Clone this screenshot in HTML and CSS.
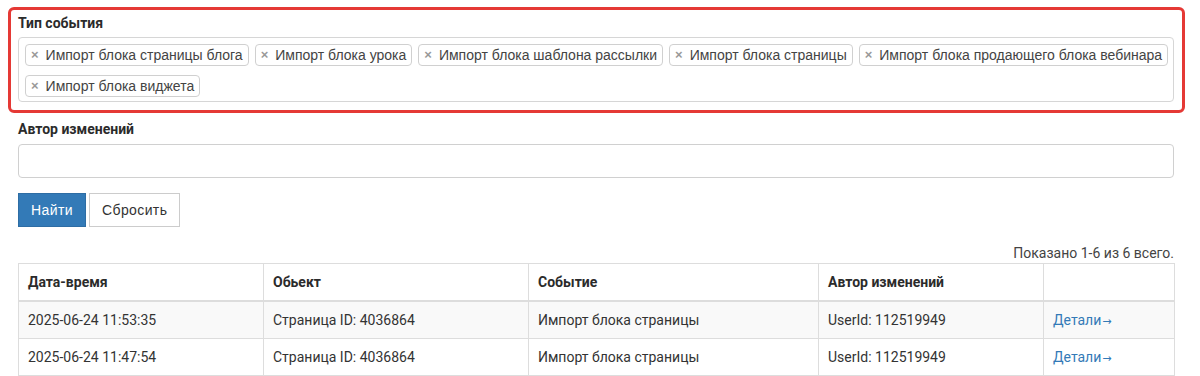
FILE: index.html
```html
<!DOCTYPE html>
<html lang="ru">
<head>
<meta charset="utf-8">
<title>Журнал</title>
<link rel="stylesheet" href="styles.css">
</head>
<body>
<div class="page">
  <div class="highlight">
    <div class="field">
      <label class="label">Тип события</label>
      <div class="select">
        <span class="tag"><span class="tag-x">×</span>Импорт блока страницы блога</span>
        <span class="tag"><span class="tag-x">×</span>Импорт блока урока</span>
        <span class="tag"><span class="tag-x">×</span>Импорт блока шаблона рассылки</span>
        <span class="tag"><span class="tag-x">×</span>Импорт блока страницы</span>
        <span class="tag"><span class="tag-x">×</span>Импорт блока продающего блока вебинара</span>
        <span class="tag"><span class="tag-x">×</span>Импорт блока виджета</span>
      </div>
    </div>
  </div>
  <div class="field author">
    <label class="label">Автор изменений</label>
    <input class="input" type="text">
  </div>
  <div class="buttons">
    <button class="btn btn-primary">Найти</button>
    <button class="btn btn-default">Сбросить</button>
  </div>
  <div class="summary">Показано 1-6 из 6 всего.</div>
  <table class="grid">
    <colgroup>
      <col class="c1"><col class="c2"><col class="c3"><col class="c4"><col class="c5">
    </colgroup>
    <thead>
      <tr><th>Дата-время</th><th>Обьект</th><th>Событие</th><th>Автор изменений</th><th></th></tr>
    </thead>
    <tbody>
      <tr><td>2025-06-24 11:53:35</td><td>Страница ID: 4036864</td><td>Импорт блока страницы</td><td>UserId: 112519949</td><td><a class="link" href="#">Детали<span class="arrow">→</span></a></td></tr>
      <tr><td>2025-06-24 11:47:54</td><td>Страница ID: 4036864</td><td>Импорт блока страницы</td><td>UserId: 112519949</td><td><a class="link" href="#">Детали<span class="arrow">→</span></a></td></tr>
    </tbody>
  </table>
</div>
</body>
</html>
```
FILE: styles.css
```css
html, body {
  margin: 0;
  padding: 0;
  background: #fff;
}
body {
  font-family: Roboto, "Liberation Sans", sans-serif;
  font-size: 14px;
  line-height: 20px;
  color: #333;
}
.page {
  padding: 0 26px 0 18px;
}
.highlight {
  margin: 7px -11px 0 -10px;
  border: 3px solid #e53935;
  border-radius: 6px;
  padding: 3px 8px 8px 7px;
}
.field {
  display: flex;
  flex-direction: column;
}
.label {
  font-weight: 700;
  margin-bottom: 4px;
  line-height: 20px;
  color: #2b2b2b;
}
.author {
  margin-top: 6px;
}
.author .label {
  margin-bottom: 5px;
}
.select {
  border: 1px solid #d6d6d6;
  border-radius: 4px;
  padding: 6px 2px 4px 6px;
  display: flex;
  flex-wrap: wrap;
  gap: 9px 6px;
  min-height: 53px;
}
.tag {
  display: inline-flex;
  align-items: center;
  height: 22px;
  box-sizing: border-box;
  border: 1px solid #d0d0d0;
  border-radius: 4px;
  background: #fff;
  padding: 0 5px 0 4px;
  font-family: "Liberation Sans", Arial, sans-serif;
  font-size: 14px;
  color: #444;
  white-space: nowrap;
}
.tag-x {
  color: #999;
  font-weight: 700;
  font-size: 13px;
  margin-right: 7px;
  margin-left: 1px;
}
.input {
  height: 34px;
  box-sizing: border-box;
  border: 1px solid #d0d0d0;
  border-radius: 4px;
  padding: 6px 12px;
  font: inherit;
  width: 100%;
}
.buttons {
  margin-top: 15px;
  display: flex;
  gap: 3px;
}
.btn {
  height: 34px;
  box-sizing: border-box;
  padding: 6px 12px;
  font-family: "Liberation Sans", Arial, sans-serif;
  font-size: 14px;
  letter-spacing: 0.4px;
  line-height: 20px;
  border-radius: 0;
  cursor: pointer;
}
.btn-primary {
  background: #337ab7;
  border: 1px solid #2e6da4;
  color: #fff;
}
.btn-default {
  background: #fff;
  border: 1px solid #ccc;
  color: #333;
}
.summary {
  margin-top: 16px;
  text-align: right;
  color: #444;
}
.grid {
  width: 100%;
  border-collapse: collapse;
  table-layout: fixed;
  border: 1px solid #ddd;
}
.c1 { width: 245px; }
.c2 { width: 265px; }
.c3 { width: 290px; }
.c4 { width: 225px; }
.c5 { width: 131px; }
.grid th, .grid td {
  border: 1px solid #ddd;
  padding: 8px 9px;
  text-align: left;
  line-height: 20px;
  vertical-align: top;
}
.grid th {
  font-weight: 700;
  color: #2b2b2b;
  border-bottom-width: 2px;
}
.grid tbody tr:nth-child(odd) {
  background: #f9f9f9;
}
.link {
  color: #337ab7;
  text-decoration: none;
}
.arrow {
  font-family: "DejaVu Sans", sans-serif;
  font-size: 11px;
  line-height: 1;
  margin-left: 1px;
}
```
